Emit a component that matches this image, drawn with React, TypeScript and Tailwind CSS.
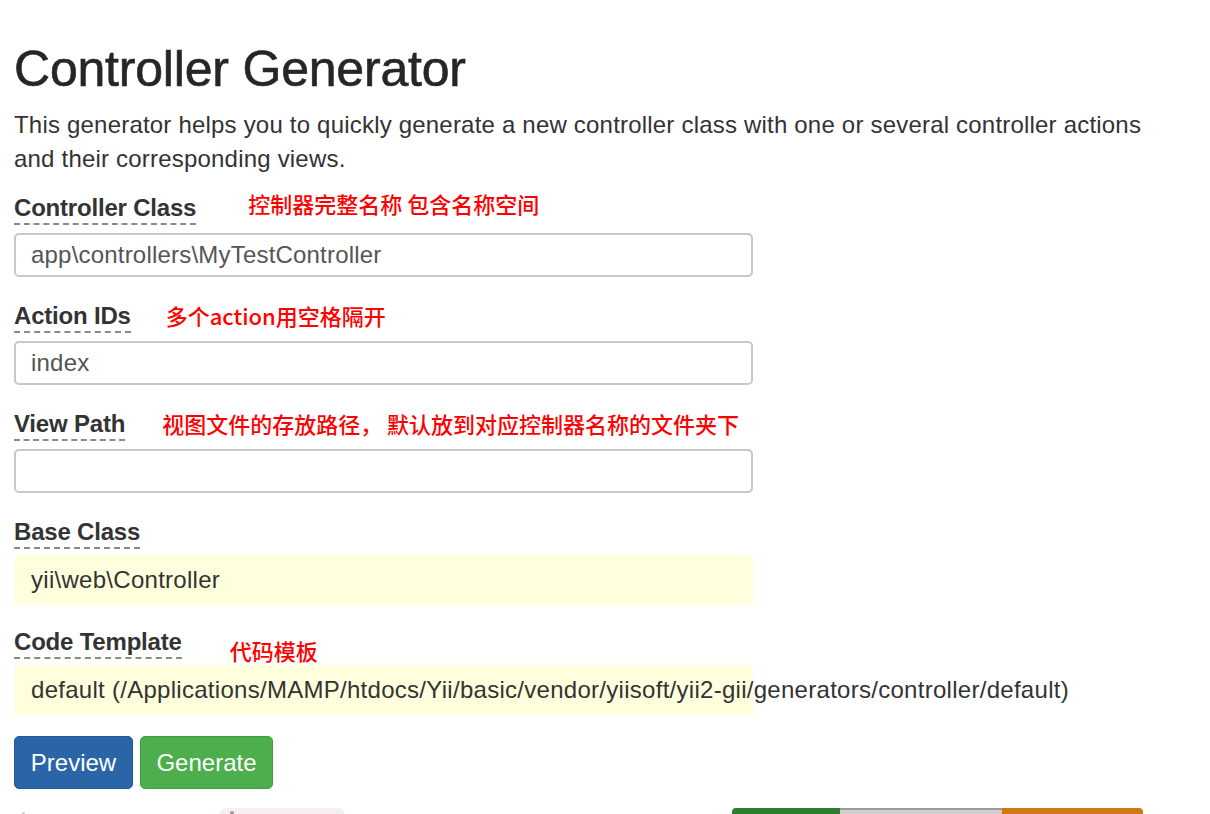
const font = "font-['Liberation_Sans','Helvetica_Neue',Arial,sans-serif]"
const cjk = "font-['Noto_Sans_CJK_SC','Liberation_Sans',sans-serif]"

function Label({ text, note, noteClass }: { text: string; note?: string; noteClass?: string }) {
  return (
    <div className="flex items-start">
      <span className="inline-block border-b-2 border-dashed border-[#8a8a8a] text-[24px] font-bold leading-[31px] tracking-[-0.2px] text-[#333]">
        {text}
      </span>
      {note && (
        <span className={`${cjk} text-[22px] font-medium leading-[31px] text-[#ff0000] ${noteClass ?? ""}`}>{note}</span>
      )}
    </div>
  )
}

function Field({ label, value, note, noteClass }: { label: string; value: string; note?: string; noteClass?: string }) {
  return (
    <div className="mb-[23px]">
      <Label text={label} note={note} noteClass={noteClass} />
      <div className="mt-[8px] flex h-[44px] w-[739px] items-center rounded-[5px] border-2 border-[#c8c8c8] px-[15px] text-[24px] tracking-[0.2px] text-[#555]">
        {value}
      </div>
    </div>
  )
}

function Sticky({ label, value, note, noteClass }: { label: string; value: string; note?: string; noteClass?: string }) {
  return (
    <div className="mb-[21px]">
      <Label text={label} note={note} noteClass={noteClass} />
      <div className="mt-[6px] flex h-[50px] w-[739px] items-center whitespace-nowrap bg-[#ffffdd] px-[17px] text-[24px] tracking-[0.28px] text-[#333]">
        {value}
      </div>
    </div>
  )
}

export default function App() {
  return (
    <div className={`${font} h-[814px] w-[1210px] overflow-hidden bg-white`}>
      <div className="px-[14px] pt-[42px]">
        <h1 className="m-0 text-[50px] font-normal leading-[55px] tracking-[-0.2px] text-[#262626] [-webkit-text-stroke:0.6px_#262626]">
          Controller Generator
        </h1>
        <p className="mt-[11px] w-[1140px] text-[24px] leading-[34px] tracking-[0.2px] text-[#333]">
          This generator helps you to quickly generate a new controller class with one or several controller actions and
          their corresponding views.
        </p>

        <div className="mt-[16px]">
          <Field label="Controller Class" value="app\controllers\MyTestController" note="控制器完整名称 包含名称空间" noteClass="ml-[52px] -mt-[4px]" />
          <Field label="Action IDs" value="index" note="多个action用空格隔开" noteClass="ml-[35px]" />
          <Field label="View Path" value="" note="视图文件的存放路径， 默认放到对应控制器名称的文件夹下" noteClass="ml-[37px]" />
          <Sticky label="Base Class" value="yii\web\Controller" />
          <Sticky
            label="Code Template"
            value="default (/Applications/MAMP/htdocs/Yii/basic/vendor/yiisoft/yii2-gii/generators/controller/default)"
            note="代码模板"
            noteClass="ml-[48px] mt-[9px] -mb-[9px]"
          />
        </div>

        <div className="flex gap-[7px]">
          <button className="h-[53px] w-[119px] rounded-[5px] border border-[#24589a] bg-[#2a65a8] text-[24px] text-white">
            Preview
          </button>
          <button className="h-[53px] w-[133px] rounded-[5px] border border-[#449d44] bg-[#4cae4c] text-[24px] text-white">
            Generate
          </button>
        </div>

        {/* footer, cut off by the window */}
        <div className="mt-[19px] flex items-start">
          <div className="ml-[8px] mt-[4px] h-[3px] w-[3px] rounded-full bg-[#ccc]" />
          <div className="ml-[195px] h-[30px] w-[124px] rounded-[6px] bg-[#f6eef1]">
            <div className="ml-[10px] mt-[3px] h-[4px] w-[4px] rounded-full bg-[#999]" />
          </div>
          <div className="ml-[388px] flex h-[30px] w-[411px] overflow-hidden rounded-t-[4px]">
            <div className="w-[108px] bg-[#2f7d30]" />
            <div className="w-[162px] border-t-2 border-[#9a9a9a] bg-[#cfcfcf]" />
            <div className="flex-1 bg-[#d17716]" />
          </div>
        </div>
      </div>
    </div>
  )
}
